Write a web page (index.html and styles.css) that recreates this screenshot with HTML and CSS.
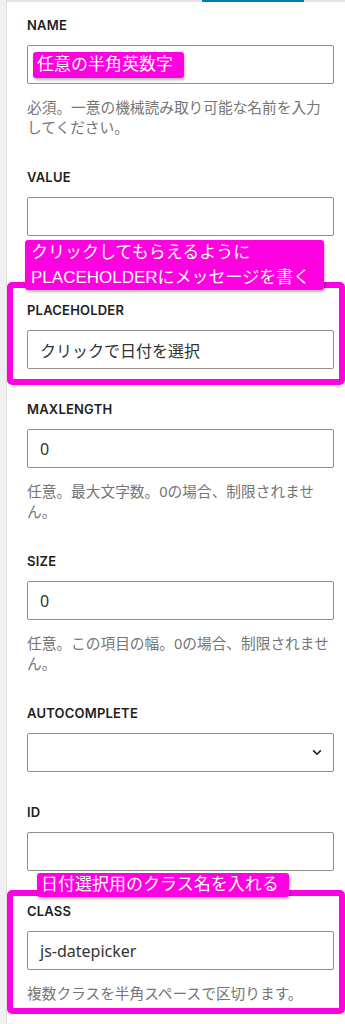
FILE: index.html
```html
<!DOCTYPE html>
<html lang="ja">
<head>
<meta charset="utf-8">
<title>Field settings</title>
<link rel="stylesheet" href="styles.css">
</head>
<body>
<div class="screen">
  <aside class="rail"></aside>
  <main class="panel">
    <div class="tabbar"><span class="tab-active"></span></div>
    <div class="fields">
      <div class="field">
        <div class="label">Name</div>
        <div class="input input--noted"><span class="note note--inline">任意の半角英数字</span></div>
        <p class="help">必須。一意の機械読み取り可能な名前を入力してください。</p>
      </div>
      <div class="field">
        <div class="label">Value</div>
        <div class="input"></div>
      </div>
      <div class="callout callout--first">
        <span class="note note--first">クリックしてもらえるように<br>PLACEHOLDERにメッセージを書く</span>
        <div class="field">
          <div class="label">Placeholder</div>
          <div class="input">クリックで日付を選択</div>
        </div>
      </div>
      <div class="field">
        <div class="label">Maxlength</div>
        <div class="input">0</div>
        <p class="help">任意。最大文字数。0の場合、制限されません。</p>
      </div>
      <div class="field">
        <div class="label">Size</div>
        <div class="input">0</div>
        <p class="help">任意。この項目の幅。0の場合、制限されません。</p>
      </div>
      <div class="field">
        <div class="label">Autocomplete</div>
        <div class="input input--select">
          <svg class="chevron" width="10" height="7" viewBox="0 0 10 7"><path d="M1.2 1.4 5 5.2 8.8 1.4" fill="none" stroke="#1e1e1e" stroke-width="1.6"/></svg>
        </div>
      </div>
      <div class="field">
        <div class="label">ID</div>
        <div class="input"></div>
      </div>
      <div class="callout callout--second">
        <span class="note note--second">日付選択用のクラス名を入れる</span>
        <div class="field">
          <div class="label">Class</div>
          <div class="input">js-datepicker</div>
          <p class="help help--tight">複数クラスを半角スペースで区切ります。</p>
        </div>
      </div>
    </div>
  </main>
</div>
</body>
</html>
```

FILE: styles.css
```css
html, body {
  margin: 0;
  padding: 0;
  background: #ffffff;
}
body {
  font-family: "Inter", "Noto Sans CJK JP", sans-serif;
  color: #1e1e1e;
  width: 345px;
  height: 1024px;
  overflow: hidden;
}
.screen {
  display: flex;
  min-height: 1024px;
}
.rail {
  width: 6px;
  flex: 0 0 6px;
  background: #f0f0f0;
  border-right: 1px solid #e0e0e0;
}
.panel {
  flex: 1;
  min-width: 0;
}
.tabbar {
  height: 2px;
  background: #e6e6e6;
  display: flex;
}
.tab-active {
  margin-left: 195px;
  width: 102px;
  background: #007cba;
}
.fields {
  padding: 15px 11px 0 20px;
}
.field + .field {
  margin-top: 32px;
}
.label {
  font-size: 13px;
  line-height: 16px;
  font-weight: 600;
  text-transform: uppercase;
  letter-spacing: 0.2px;
  color: #1e1e1e;
}
.input {
  position: relative;
  margin-top: 12px;
  height: 39px;
  box-sizing: border-box;
  border: 1px solid #8f8f8f;
  border-radius: 2px;
  padding: 0 12px;
  display: flex;
  align-items: center;
  font-size: 16px;
  color: #333333;
  font-family: "Noto Sans", "Noto Sans CJK JP", sans-serif;
}
.input--noted {
  padding-left: 5px;
}
.input--select {
  justify-content: flex-end;
  padding-right: 11px;
}
.help {
  margin: 13px 0 0;
  font-size: 14.7px;
  line-height: 20px;
  color: #757575;
  font-family: "Noto Sans", "Noto Sans CJK JP", sans-serif;
}
.help--tight {
  margin-top: 13px;
}
.note {
  background: #ff00e1;
  color: #ffffff;
  font-family: "Liberation Sans", "Noto Sans CJK JP", sans-serif;
  font-size: 17px;
  line-height: 25px;
  border-radius: 3px;
  box-shadow: 1px 2px 3px rgba(0, 0, 0, 0.3);
  white-space: nowrap;
  padding: 0 10px 0 4px;
}
.note--inline {
  line-height: 26px;
  padding: 0 11px 0 4px;
}
.note--first,
.note--second {
  position: absolute;
  z-index: 2;
}
.note--first {
  left: 12px;
  top: -48px;
  padding: 0 14px 0 6px;
}
.note--second {
  left: 24px;
  top: -23px;
  line-height: 24px;
}
.callout {
  position: relative;
  border: 6px solid #ff00e1;
  border-radius: 5px;
  margin-left: -20px;
  margin-right: -11px;
}
.callout--first {
  margin-top: 46px;
  padding: 14px 5px 10px 14px;
}
.callout--second {
  margin-top: 19px;
  padding: 7px 5px 5px 14px;
}
.callout + .field {
  margin-top: 16px;
}
```
